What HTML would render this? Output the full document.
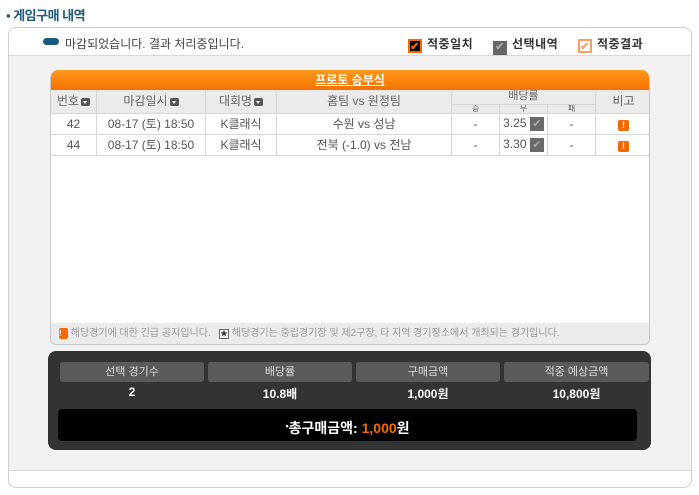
<!DOCTYPE html><html><head><meta charset="utf-8"><style>
*{margin:0;padding:0;box-sizing:border-box}
body{width:699px;height:495px;background:#fff;font-family:"Liberation Sans","Noto Sans CJK KR",sans-serif;position:relative;overflow:hidden;font-size:12px;color:#444}
.abs{position:absolute}
.title{left:6px;top:5px;font-size:13px;font-weight:bold;color:#1a5a7a;letter-spacing:-0.5px}
.outer{left:8px;top:27px;width:684px;height:461px;border:1px solid #cfcfcf;border-radius:8px;background:#f2f2f2;overflow:hidden}
.top{left:0;top:0;width:100%;height:28px;background:#fff;border-bottom:1px solid #d8d8d8}
.bot{left:0;top:442px;width:100%;height:20px;background:#fff;border-top:1px solid #d8d8d8}
.tbl{left:50px;top:70px;width:600px;height:275px;background:#fff;border:1px solid #c8c8c8;border-top:none;border-radius:8px 8px 6px 6px;overflow:hidden}
.oh{left:0;top:0;width:100%;height:20px;background:linear-gradient(#fb9a1c,#f97000);color:#fff;font-weight:bold;text-align:center;font-size:12px;line-height:20px;text-decoration:underline}
table{position:absolute;left:-1px;top:20px;width:601px;border-collapse:collapse;font-size:12px;color:#555;table-layout:fixed}
td{border:1px solid #d6d6d6;text-align:center;border-top:none;padding:0;line-height:14px;overflow:hidden;white-space:nowrap}
tr.d td{height:21px}
tr.h td{background:#ebebeb;color:#666}
.dd{display:inline-block;width:9px;height:8px;background:#555;border-radius:2px;vertical-align:middle;margin-left:2px;position:relative}
.dd:after{content:"";position:absolute;left:2px;top:3px;border:2.5px solid transparent;border-top:3px solid #fff}
.ex{display:inline-block;width:11px;height:11px;background:#f56a00;color:#fff;font-size:9px;font-weight:bold;line-height:11px;border-radius:2px}
.cb{display:inline-block;width:14px;height:14px;background:#6a6a6a;vertical-align:middle;position:relative;color:#aaa;font-size:11px;line-height:14px;text-align:center}
.note{left:0;top:253px;width:100%;height:22px;background:#ebebeb;font-size:10px;color:#999;line-height:22px;padding-left:8px}
.dark{left:48px;top:351px;width:603px;height:99px;background:#333;border-radius:8px}
.hb{top:11px;height:20px;background:#5a5a5a;border-radius:3px;color:#ddd;font-size:11px;text-align:center;line-height:20px}
.v{top:34px;color:#fff;font-weight:bold;font-size:12px;text-align:center}
.tot{left:10px;top:58px;width:579px;height:32px;background:#000;border-radius:4px;color:#fff;font-weight:bold;font-size:14px;text-align:center;line-height:34px}
.leg{top:35px;font-size:12px;font-weight:bold;color:#333;letter-spacing:0.5px}
.lb{display:inline-block;width:14px;height:14px;vertical-align:-2px;margin-right:5px;text-align:center;line-height:13px;font-size:11px}
</style></head><body>
<div class="abs title">▪ 게임구매 내역</div>
<div class="abs outer">
<div class="abs top"></div>
<div class="abs bot"></div>
</div>
<div class="abs" style="left:43px;top:38px;width:16px;height:7px;background:#1a5a7a;border-radius:4px"></div>
<div class="abs" style="left:65px;top:35px;font-size:12px;color:#444">마감되었습니다. 결과 처리중입니다.</div>
<div class="abs leg" style="left:408px"><span class="lb" style="background:#000;border:2px solid #f56a00;color:#f56a00">✔</span>적중일치</div>
<div class="abs leg" style="left:493px"><span class="lb" style="background:#666;color:#aaa">✔</span>선택내역</div>
<div class="abs leg" style="left:578px"><span class="lb" style="background:#fff;border:2px solid #f9a060;color:#f9a060">✔</span>적중결과</div>
<div class="abs tbl">
<div class="abs oh">프로토 승부식</div>
<table>
<colgroup><col style="width:46px"><col style="width:109px"><col style="width:71px"><col style="width:175px"><col style="width:48px"><col style="width:48px"><col style="width:48px"><col style="width:56px"></colgroup>
<tr class="h" style="height:14px"><td rowspan="2">번호<span class="dd"></span></td><td rowspan="2">마감일시<span class="dd"></span></td><td rowspan="2">대회명<span class="dd"></span></td><td rowspan="2">홈팀 vs 원정팀</td><td colspan="3" style="height:14px;font-size:11px;line-height:13px">배당률</td><td rowspan="2">비고</td></tr>
<tr class="h" style="height:9px"><td style="height:9px;font-size:8px;line-height:8px">승</td><td style="font-size:8px;line-height:8px">무</td><td style="font-size:8px;line-height:8px">패</td></tr>
<tr class="d"><td>42</td><td>08-17 (토) 18:50</td><td>K클래식</td><td>수원 vs 성남</td><td>-</td><td>3.25 <span class="cb">✔</span></td><td>-</td><td><span class="ex">!</span></td></tr>
<tr class="d"><td>44</td><td>08-17 (토) 18:50</td><td>K클래식</td><td>전북 (-1.0) vs 전남</td><td>-</td><td>3.30 <span class="cb">✔</span></td><td>-</td><td><span class="ex">!</span></td></tr>
</table>
<div class="abs note"><span class="ex" style="width:9px;font-size:8px">!</span> 해당경기에 대한 긴급 공지입니다. &nbsp;&nbsp;<span style="display:inline-block;width:10px;height:10px;border:1px solid #666;font-size:8px;line-height:8px;text-align:center;color:#333;background:#fff">★</span> 해당경기는 중립경기장 및 제2구장, 타 지역 경기장소에서 개최되는 경기입니다.</div>
</div>
<div class="abs dark">
<div class="abs hb" style="left:12px;width:144px">선택 경기수</div>
<div class="abs hb" style="left:160px;width:144px">배당률</div>
<div class="abs hb" style="left:308px;width:144px">구매금액</div>
<div class="abs hb" style="left:456px;width:145px">적중 예상금액</div>
<div class="abs v" style="left:12px;width:144px">2</div>
<div class="abs v" style="left:160px;width:144px">10.8배</div>
<div class="abs v" style="left:308px;width:144px">1,000원</div>
<div class="abs v" style="left:456px;width:145px">10,800원</div>
<div class="abs tot"><span style="font-size:9px;vertical-align:4px">▪</span>총구매금액: <span style="color:#f56a00">1,000</span>원</div>
</div>
</body></html>
